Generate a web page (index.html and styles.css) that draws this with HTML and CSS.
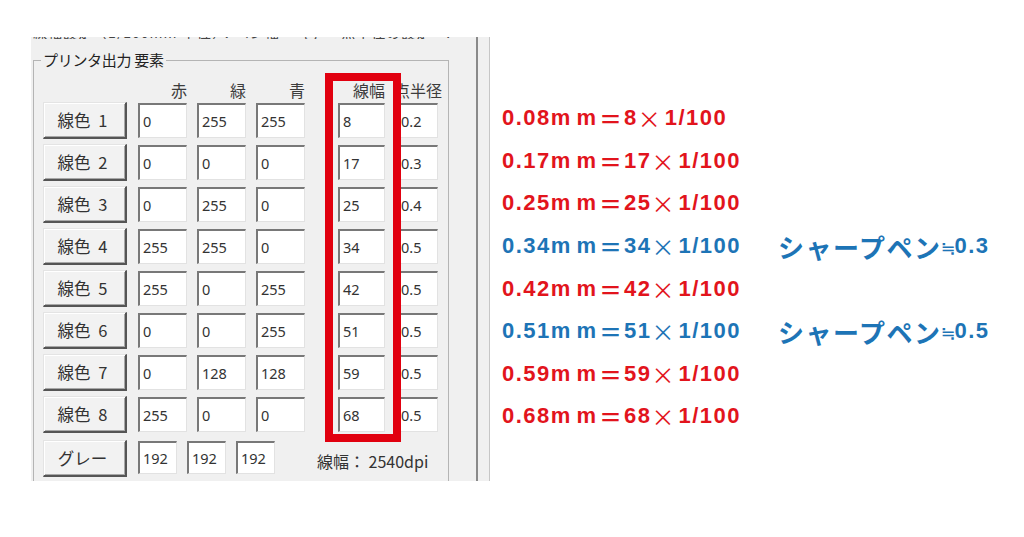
FILE: index.html
```html
<!DOCTYPE html>
<html lang="ja">
<head>
<meta charset="utf-8">
<title>プリンタ出力 要素</title>
<link rel="stylesheet" href="styles.css">
</head>
<body>
<div class="page">
  <div class="panel">
    <div class="main">
      <div class="cliptext"><span>線幅設定（1/100mm 単位）：ペン幅 ・ 色 ・ 点半径の設定　.</span></div>
      <fieldset class="group">
        <legend>プリンタ出力 要素</legend>
        <div class="grid">
          <div class="hd"></div>
          <div class="hd">赤</div>
          <div class="hd">緑</div>
          <div class="hd">青</div>
          <div class="hd hd-w">線幅</div>
          <div class="hd hd-r">点半径</div>

          <div class="btn">線色 1</div><div class="tb">0</div><div class="tb">255</div><div class="tb">255</div><div class="tb tb-w">8</div><div class="tb tb-r">0.2</div>
          <div class="btn">線色 2</div><div class="tb">0</div><div class="tb">0</div><div class="tb">0</div><div class="tb tb-w">17</div><div class="tb tb-r">0.3</div>
          <div class="btn">線色 3</div><div class="tb">0</div><div class="tb">255</div><div class="tb">0</div><div class="tb tb-w">25</div><div class="tb tb-r">0.4</div>
          <div class="btn">線色 4</div><div class="tb">255</div><div class="tb">255</div><div class="tb">0</div><div class="tb tb-w">34</div><div class="tb tb-r">0.5</div>
          <div class="btn">線色 5</div><div class="tb">255</div><div class="tb">0</div><div class="tb">255</div><div class="tb tb-w">42</div><div class="tb tb-r">0.5</div>
          <div class="btn">線色 6</div><div class="tb">0</div><div class="tb">0</div><div class="tb">255</div><div class="tb tb-w">51</div><div class="tb tb-r">0.5</div>
          <div class="btn">線色 7</div><div class="tb">0</div><div class="tb">128</div><div class="tb">128</div><div class="tb tb-w">59</div><div class="tb tb-r">0.5</div>
          <div class="btn">線色 8</div><div class="tb">255</div><div class="tb">0</div><div class="tb">0</div><div class="tb tb-w">68</div><div class="tb tb-r">0.5</div>
        </div>
        <div class="grayrow">
          <div class="btn">グレー</div>
          <div class="tb tb-s">192</div>
          <div class="tb tb-s">192</div>
          <div class="tb tb-s">192</div>
          <div class="dpi">線幅： 2540dpi</div>
        </div>
      </fieldset>
    </div>
    <div class="divider"></div>
    <div class="redbox"></div>
  </div>

  <div class="eqs">
    <div class="eqline red"><div class="eq"><span class="n">0.08</span><span class="mm">mm</span><span class="is">＝</span><span class="n">8</span><span class="x">×</span><span class="n">1/100</span></div></div>
    <div class="eqline red"><div class="eq"><span class="n">0.17</span><span class="mm">mm</span><span class="is">＝</span><span class="n">17</span><span class="x">×</span><span class="n">1/100</span></div></div>
    <div class="eqline red"><div class="eq"><span class="n">0.25</span><span class="mm">mm</span><span class="is">＝</span><span class="n">25</span><span class="x">×</span><span class="n">1/100</span></div></div>
    <div class="eqline blue"><div class="eq"><span class="n">0.34</span><span class="mm">mm</span><span class="is">＝</span><span class="n">34</span><span class="x">×</span><span class="n">1/100</span></div><div class="note"><span class="kana">シャープペン</span><span class="approx">≒</span><span class="n">0.3</span></div></div>
    <div class="eqline red"><div class="eq"><span class="n">0.42</span><span class="mm">mm</span><span class="is">＝</span><span class="n">42</span><span class="x">×</span><span class="n">1/100</span></div></div>
    <div class="eqline blue"><div class="eq"><span class="n">0.51</span><span class="mm">mm</span><span class="is">＝</span><span class="n">51</span><span class="x">×</span><span class="n">1/100</span></div><div class="note"><span class="kana">シャープペン</span><span class="approx">≒</span><span class="n">0.5</span></div></div>
    <div class="eqline red"><div class="eq"><span class="n">0.59</span><span class="mm">mm</span><span class="is">＝</span><span class="n">59</span><span class="x">×</span><span class="n">1/100</span></div></div>
    <div class="eqline red"><div class="eq"><span class="n">0.68</span><span class="mm">mm</span><span class="is">＝</span><span class="n">68</span><span class="x">×</span><span class="n">1/100</span></div></div>
  </div>
</div>
</body>
</html>
```

FILE: styles.css
```css
html, body {
  margin: 0;
  padding: 0;
  background: #ffffff;
}
body {
  width: 1024px;
  height: 537px;
  overflow: hidden;
  font-family: "Noto Sans CJK JP", "Noto Sans", sans-serif;
}
.page {
  display: flex;
  align-items: flex-start;
}

/* ---------- dialog panel ---------- */
.panel {
  position: relative;
  margin: 37px 0 0 31px;
  width: 459px;
  height: 444px;
  box-sizing: border-box;
  background: #f0f0f0;
  border-right: 1px solid #c6c6c6;
  display: flex;
  overflow: hidden;
}
.main {
  width: 445px;
  padding-left: 2px;
  box-sizing: border-box;
}
.divider {
  width: 2px;
  background: #8a8a8a;
}
.cliptext {
  height: 2px;
  overflow: hidden;
  white-space: nowrap;
  font-size: 14px;
  line-height: 16px;
  color: #444;
  letter-spacing: 1px;
}
.cliptext span {
  display: block;
  height: 16px;
  margin-top: -13px;
}
.group {
  margin: 11px 0 0 0;
  padding: 0 0 0 9px;
  width: 416px;
  box-sizing: border-box;
  min-width: 0;
  border: 1px solid #b4b4b4;
  border-bottom: none;
}
.group legend {
  padding: 0 2px;
  margin-left: -2px;
  font-size: 15px;
  line-height: 20px;
  color: #222;
  letter-spacing: -0.3px;
}
.grid {
  display: grid;
  grid-template-columns: 95px 59px 59px 82px 58px 42px;
  grid-template-rows: 32px repeat(8, 42px);
}
.hd {
  align-self: end;
  width: 49px;
  margin-bottom: 2px;
  text-align: right;
  font-size: 16px;
  line-height: 20px;
  color: #3c3c3c;
}
.hd-w { width: 47px; }
.hd-r { width: 44px; margin-left: -2px; white-space: nowrap; }

.btn {
  width: 84px;
  height: 37px;
  box-sizing: border-box;
  background: #f2f2f2;
  border-top: 1px solid #e4e4e4;
  border-left: 1px solid #e4e4e4;
  border-right: 2px solid #555;
  border-bottom: 2px solid #555;
  box-shadow: inset 1px 1px 0 #ffffff, inset -1px -1px 0 #a8a8a8;
  display: flex;
  align-items: center;
  justify-content: center;
  padding-right: 4px;
  font-size: 16.5px;
  word-spacing: 4px;
  color: #333;
  white-space: pre;
}
.tb {
  width: 49px;
  height: 35px;
  margin-top: 1px;
  box-sizing: border-box;
  background: #ffffff;
  border-top: 2px solid #787878;
  border-left: 2px solid #787878;
  border-right: 1px solid #e2e2e2;
  border-bottom: 1px solid #e2e2e2;
  padding-left: 3px;
  display: flex;
  align-items: center;
  font-family: "Noto Sans", sans-serif;
  font-size: 14.5px;
  color: #333;
}
.tb-w { width: 47px; }
.tb-r { width: 42px; }
.tb-s { width: 39px; height: 33px; }

.grayrow {
  display: flex;
  align-items: flex-start;
  gap: 10px;
  margin-top: 2px;
  height: 44px;
}
.grayrow .btn { margin-right: 1px; }
.dpi {
  margin-left: 32px;
  margin-top: 11px;
  font-size: 16px;
  line-height: 20px;
  color: #333;
  white-space: nowrap;
}

.redbox {
  position: absolute;
  left: 294px;
  top: 36px;
  width: 76px;
  height: 369px;
  box-sizing: border-box;
  border: 8px solid #e1000f;
}

/* ---------- formulas ---------- */
.eqs {
  margin: 97px 0 0 12px;
}
.eqline {
  display: grid;
  grid-template-columns: 276px auto;
  align-items: center;
  height: 42.6px;
  white-space: nowrap;
}
.red { color: #e2141c; }
.blue { color: #1d74b6; }
.eq, .note {
  display: flex;
  align-items: center;
}
.n {
  font-family: "Liberation Sans", "Noto Sans", sans-serif;
  font-weight: 700;
  font-size: 22px;
  letter-spacing: 1.5px;
}
.mm {
  font-family: "Liberation Sans", sans-serif;
  font-weight: 700;
  font-size: 22px;
  letter-spacing: 6px;
}
.is {
  font-family: "Noto Sans CJK JP", sans-serif;
  font-weight: 700;
  font-size: 23px;
  margin: 0 2px 0 -3px;
}
.x {
  font-family: "Noto Sans CJK JP", sans-serif;
  font-weight: 400;
  font-size: 23px;
  margin: 0 4px 0 0;
}
.kana {
  font-family: "Noto Sans CJK JP", sans-serif;
  font-weight: 700;
  font-size: 26px;
  letter-spacing: 1.5px;
}
.approx {
  font-family: "Noto Sans CJK JP", sans-serif;
  font-weight: 700;
  font-size: 18px;
  margin: 0 -1px 0 0;
}
```
